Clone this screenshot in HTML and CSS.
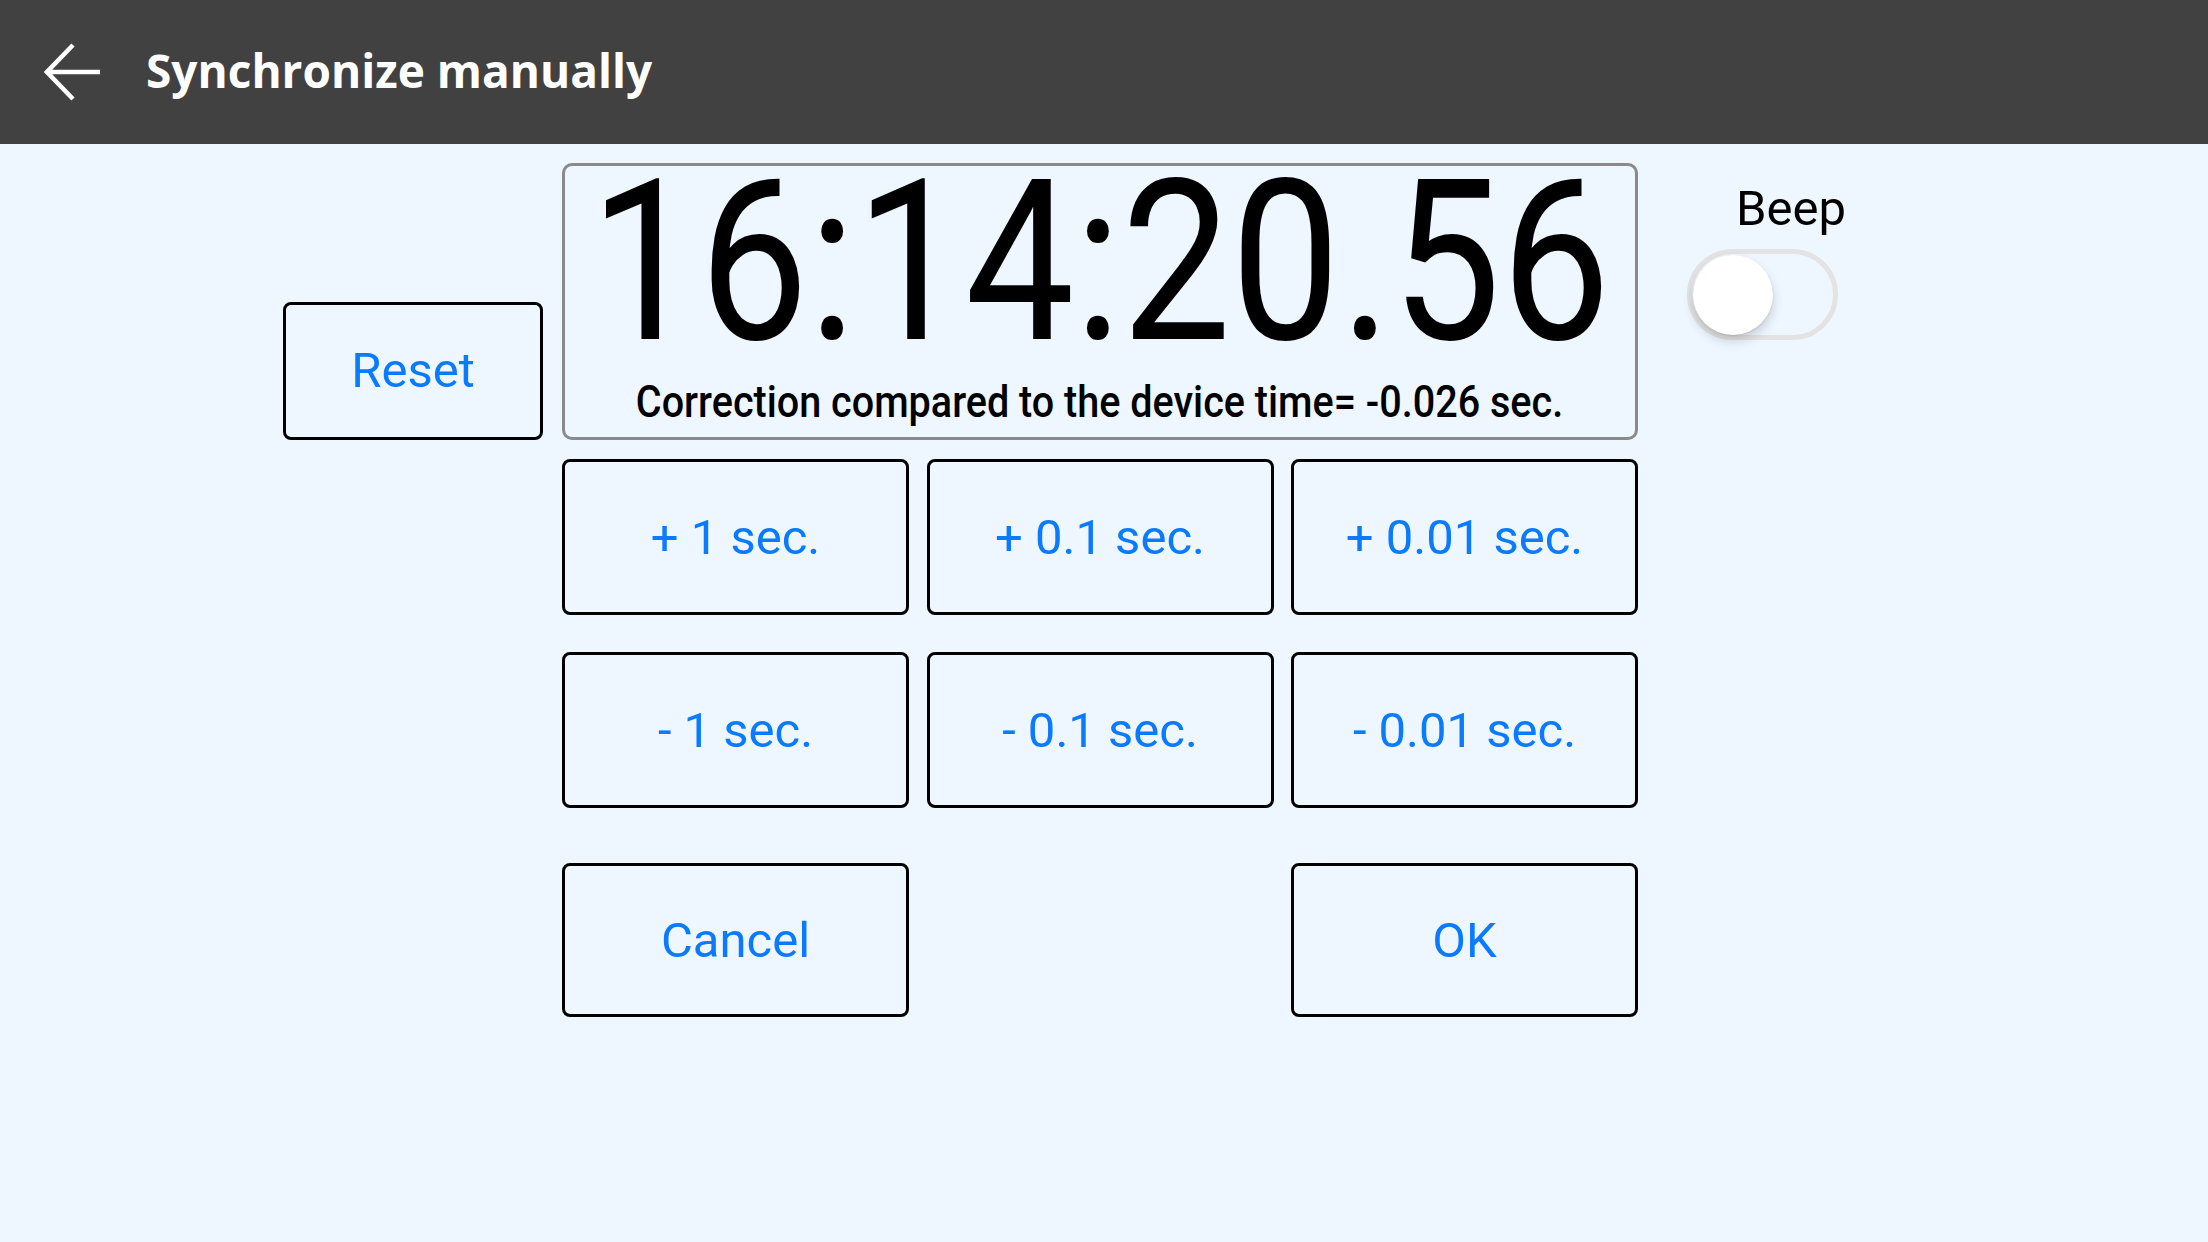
FILE: index.html
```html
<!DOCTYPE html>
<html lang="en">
<head>
<meta charset="utf-8">
<title>Synchronize manually</title>
<link rel="stylesheet" href="styles.css">
</head>
<body>
<header class="topbar">
  <svg class="back" width="58" height="58" viewBox="0 0 58 58" aria-hidden="true">
    <path d="M56 29 H3 M29 2 L3 29 L29 56" fill="none" stroke="#ffffff" stroke-width="4.5" stroke-linecap="butt" stroke-linejoin="miter"/>
  </svg>
  <h1 class="title">Synchronize manually</h1>
</header>
<main class="content">
  <div class="col-left">
    <button class="btn btn-reset">Reset</button>
  </div>
  <div class="col-center">
    <div class="clock">
      <div class="clock-time"><span class="narrow narrow-time">16:14:20.56</span></div>
      <div class="clock-note"><span class="narrow narrow-note">Correction compared to the device time= -0.026 sec.</span></div>
    </div>
    <div class="pad">
      <button class="btn">+ 1 sec.</button>
      <button class="btn">+ 0.1 sec.</button>
      <button class="btn">+ 0.01 sec.</button>
    </div>
    <div class="pad pad-minus">
      <button class="btn">- 1 sec.</button>
      <button class="btn">- 0.1 sec.</button>
      <button class="btn">- 0.01 sec.</button>
    </div>
    <div class="pad pad-actions">
      <button class="btn">Cancel</button>
      <span class="pad-gap"></span>
      <button class="btn">OK</button>
    </div>
  </div>
  <div class="col-right">
    <div class="beep-label">Beep</div>
    <div class="toggle"><span class="knob"></span></div>
  </div>
</main>
</body>
</html>
```
FILE: styles.css
```css
html, body {
  margin: 0;
  padding: 0;
}
body {
  width: 2208px;
  height: 1242px;
  background: #eef6ff;
  font-family: Roboto, "Liberation Sans", sans-serif;
  overflow: hidden;
}
.topbar {
  height: 144px;
  background: #414141;
  display: flex;
  align-items: center;
  box-sizing: border-box;
  padding-left: 44px;
}
.back {
  display: block;
  flex: none;
}
.title {
  margin: 0 0 4px 44px;
  color: #ffffff;
  font-family: "Open Sans", "Liberation Sans", sans-serif;
  font-weight: 700;
  font-size: 46px;
  letter-spacing: 0;
}
.content {
  display: flex;
  align-items: flex-start;
  padding: 19px 0 0 283px;
}
.col-left {
  width: 260px;
  flex: none;
  padding-top: 139px;
  margin-right: 19px;
}
.btn {
  display: flex;
  align-items: center;
  justify-content: center;
  box-sizing: border-box;
  margin: 0;
  padding: 0;
  background: transparent;
  border: 3px solid #000000;
  border-radius: 8px;
  color: #0a7aff;
  font-family: Roboto, "Liberation Sans", sans-serif;
  font-size: 49px;
  font-weight: 400;
  height: 156px;
  width: 100%;
  white-space: nowrap;
}
.btn-reset {
  height: 138px;
  padding-bottom: 2px;
}
.col-center {
  width: 1076px;
  flex: none;
}
.clock {
  box-sizing: border-box;
  height: 277px;
  border: 3px solid #8a8a8a;
  border-radius: 10px;
  padding-top: 7px;
  color: #000000;
  font-family: Roboto, "Liberation Sans", sans-serif;
  font-weight: 400;
  white-space: nowrap;
}
.clock-time,
.clock-note {
  display: flex;
  justify-content: center;
}
.narrow {
  display: block;
  flex: none;
  transform-origin: 50% 50%;
}
.clock-time {
  font-size: 225px;
  line-height: 178px;
  height: 178px;
}
.narrow-time {
  transform: scaleX(0.865);
}
.clock-note {
  margin-top: 28px;
  font-size: 45px;
  line-height: 45px;
  font-weight: 500;
}
.narrow-note {
  transform: scaleX(0.879);
}
.pad {
  display: grid;
  grid-template-columns: 347px 347px 347px;
  column-gap: 17.5px;
  margin-top: 19px;
}
.pad-minus {
  margin-top: 37px;
}
.pad-actions {
  margin-top: 55px;
}
.pad-actions .btn {
  height: 154px;
}
.col-right {
  margin-left: 49px;
  padding-top: 16px;
}
.beep-label {
  padding-left: 49px;
  font-family: Roboto, "Liberation Sans", sans-serif;
  font-size: 49px;
  line-height: 60px;
  color: #000000;
}
.toggle {
  margin-top: 10px;
  width: 151px;
  height: 91px;
  box-sizing: border-box;
  border: 5px solid #e3e3e3;
  border-radius: 46px;
  position: relative;
}
.knob {
  position: absolute;
  left: 1px;
  top: 1px;
  width: 80px;
  height: 80px;
  border-radius: 50%;
  background: #ffffff;
  box-shadow: 0 6px 12px rgba(0, 0, 0, 0.16), 0 1px 2px rgba(0, 0, 0, 0.12);
}
```
